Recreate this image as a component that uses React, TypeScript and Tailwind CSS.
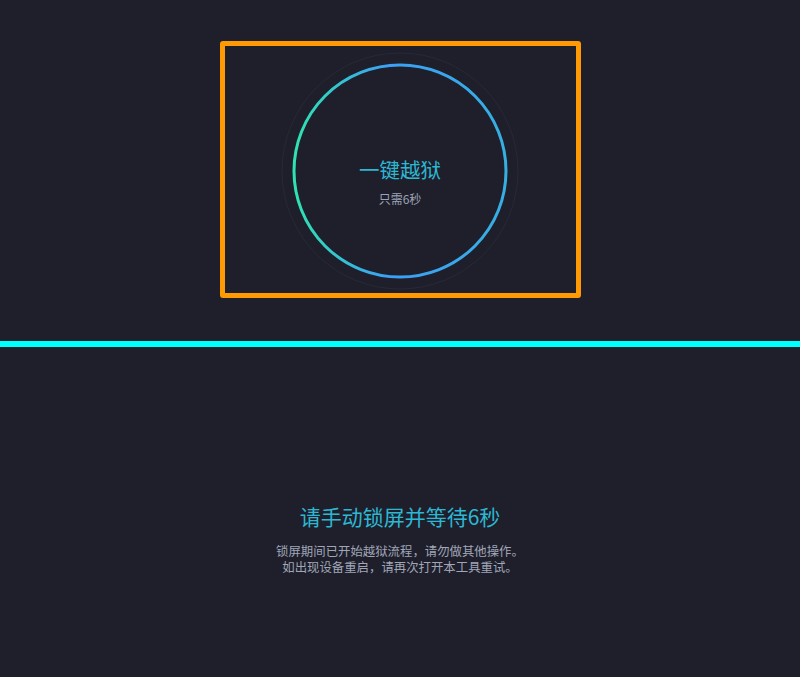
import React from 'react';

const font = { fontFamily: '"Noto Sans CJK SC", "Noto Sans", sans-serif' };

// gradient ring drawn in svg, text laid over it
const Ring = () => (
  <svg width="240" height="240" viewBox="0 0 240 240" className="absolute inset-0">
    <defs>
      <linearGradient id="ring" x1="0" y1="0" x2="1" y2="0">
        <stop offset="0%" stopColor="#2fe3b0" />
        <stop offset="45%" stopColor="#3c9ff6" />
        <stop offset="100%" stopColor="#36afe2" />
      </linearGradient>
    </defs>
    <circle cx="120" cy="120" r="118" fill="none" stroke="#272936" strokeWidth="1" />
    <circle cx="120" cy="120" r="106" fill="none" stroke="url(#ring)" strokeWidth="3" />
  </svg>
);

export default function App() {
  return (
    <div className="w-[800px] h-[677px] bg-[#1e1f2b] flex flex-col" style={font}>
      <div className="pt-[41px] flex justify-center">
        <div className="w-[361px] h-[257px] border-[5px] border-[#ff9a05] rounded-[3px] flex items-center justify-center pt-[3px]">
          <div className="relative w-[240px] h-[240px] flex flex-col items-center pt-[102px]">
            <Ring />
            <div className="relative text-[20.5px] leading-[32px] text-[#2db7d2]">一键越狱</div>
            <div className="relative mt-[6px] text-[12px] leading-[16px] text-[#9ca2b5]">只需6秒</div>
          </div>
        </div>
      </div>
      <div className="mt-[43px] h-[6px] bg-[#00ffff]" />
      <div className="mt-[155px] flex flex-col items-center">
        <div className="text-[21px] leading-[28px] text-[#2db7d2]">请手动锁屏并等待6秒</div>
        <div className="mt-[13px] text-[12.4px] leading-[16px] text-[#a0a6b8] text-center">
          <p>锁屏期间已开始越狱流程，请勿做其他操作。</p>
          <p>如出现设备重启，请再次打开本工具重试。</p>
        </div>
      </div>
    </div>
  );
}
